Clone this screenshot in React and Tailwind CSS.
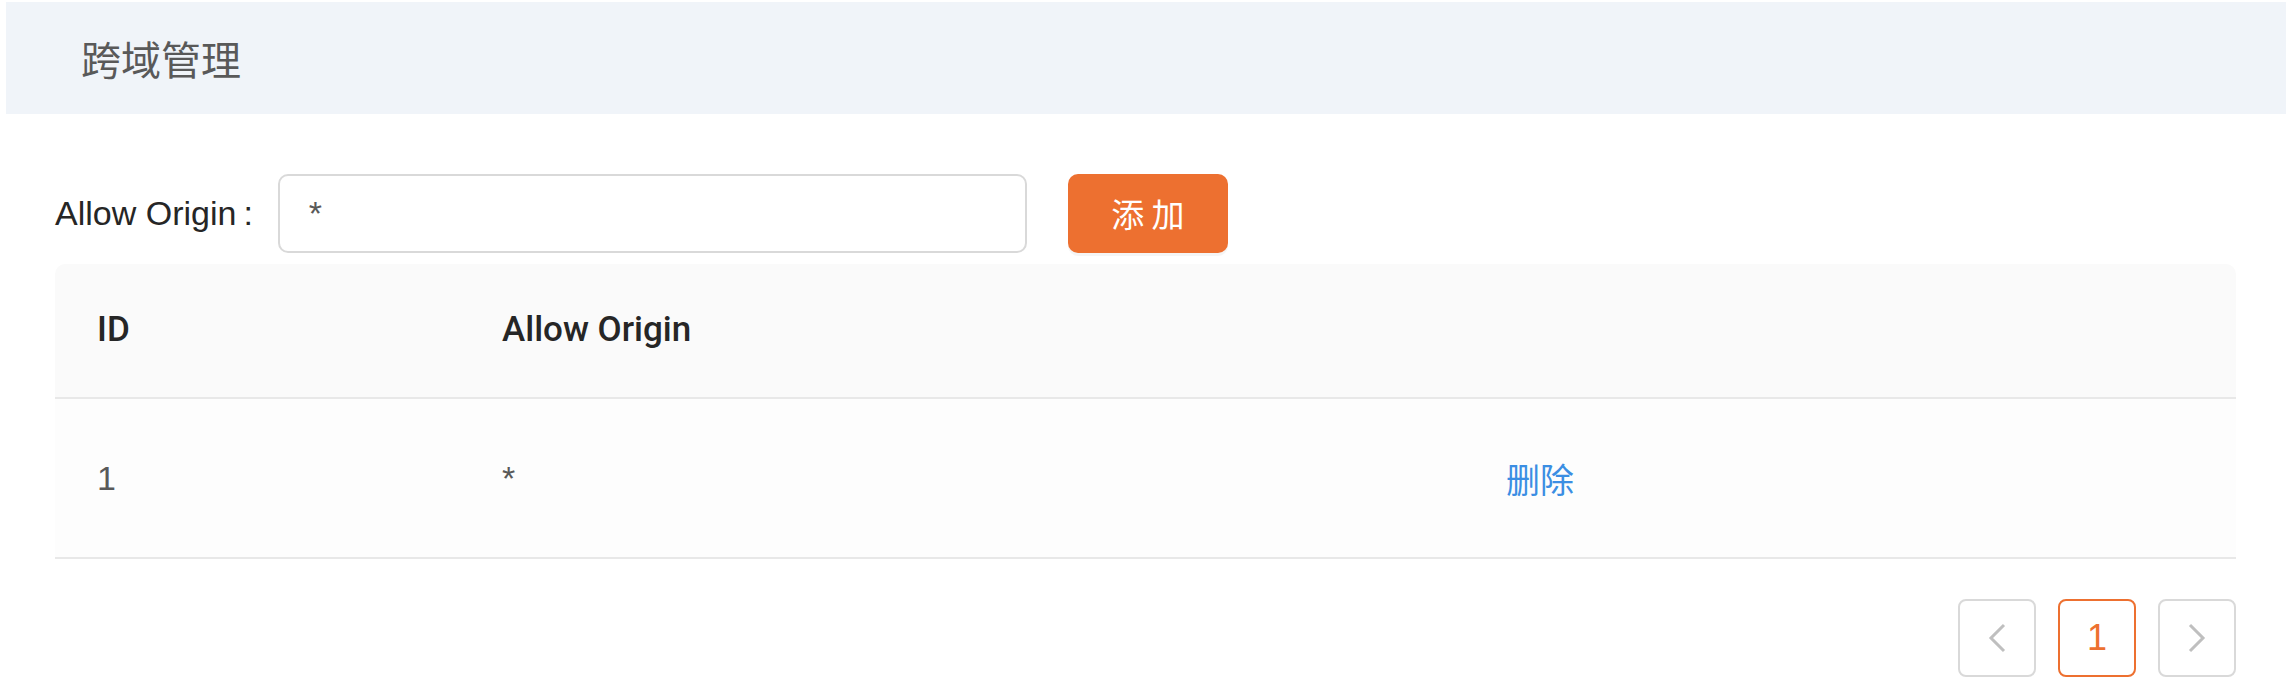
export default function App() {
  const rows = [{ id: 1, origin: "*" }];

  return (
    <div className="w-[2290px] h-[684px] bg-white font-['Liberation_Sans','Noto_Sans_CJK_SC',sans-serif] overflow-hidden">
      <div className="mt-[2px] ml-[6px] mr-[4px] h-[112px] bg-[#f0f4f9] flex items-center pl-[75px]">
        <h2 className="text-[40px] text-[#595959] font-['Noto_Sans_CJK_SC',sans-serif]">跨域管理</h2>
      </div>

      <div className="pl-[55px] pr-[54px]">
        <div className="mt-[60px] flex items-center h-[79px]">
          <label className="text-[34px] text-[#262626] flex items-center">
            Allow Origin<span className="ml-[7px] mr-[25px]">:</span>
          </label>
          <div className="w-[749px] h-[79px] border-2 border-[#d9d9d9] rounded-[10px] flex items-center pl-[29px] text-[34px] text-[#595959]">
            *
          </div>
          <button className="ml-[41px] w-[160px] h-[79px] rounded-[10px] bg-[#ed7030] text-white text-[33px] font-['Noto_Sans_CJK_SC',sans-serif] shadow-[0_3px_0_rgba(0,0,0,0.04)] flex items-center justify-center">
            添 加
          </button>
        </div>

        <table className="mt-[11px] w-full table-fixed border-collapse">
          <thead>
            <tr className="bg-[#fafafa] border-b-2 border-[#e8e8e8]">
              <th className="w-[405px] h-[134px] pl-[42px] text-left text-[35px] font-medium font-['Roboto',sans-serif] text-[#262626] rounded-tl-[10px]">ID</th>
              <th className="w-[1004px] pl-[42px] text-left text-[35px] font-medium font-['Roboto',sans-serif] text-[#262626]">Allow Origin</th>
              <th className="rounded-tr-[10px]"></th>
            </tr>
          </thead>
          <tbody>
            {rows.map((r) => (
              <tr key={r.id} className="bg-[#fdfdfd] border-b-2 border-[#e8e8e8]">
                <td className="h-[160px] pl-[42px] text-[34px] text-[#595959]">{r.id}</td>
                <td className="pl-[42px] text-[34px] text-[#595959]">{r.origin}</td>
                <td className="pl-[42px] text-[34px] text-[#3b8ee3] font-['Noto_Sans_CJK_SC',sans-serif]">删除</td>
              </tr>
            ))}
          </tbody>
        </table>

        <div className="mt-[40px] flex justify-end gap-[22px]">
          <div className="w-[78px] h-[78px] border-2 border-[#d9d9d9] rounded-[8px] flex items-center justify-center">
            <svg width="20" height="30" viewBox="0 0 20 30" fill="none" stroke="#bfbfbf" strokeWidth="3">
              <path d="M17 2 L4 15 L17 28" />
            </svg>
          </div>
          <div className="w-[78px] h-[78px] border-2 border-[#ed7030] rounded-[8px] flex items-center justify-center text-[36px] text-[#ed7030]">
            1
          </div>
          <div className="w-[78px] h-[78px] border-2 border-[#d9d9d9] rounded-[8px] flex items-center justify-center">
            <svg width="20" height="30" viewBox="0 0 20 30" fill="none" stroke="#bfbfbf" strokeWidth="3">
              <path d="M3 2 L16 15 L3 28" />
            </svg>
          </div>
        </div>
      </div>
    </div>
  );
}
